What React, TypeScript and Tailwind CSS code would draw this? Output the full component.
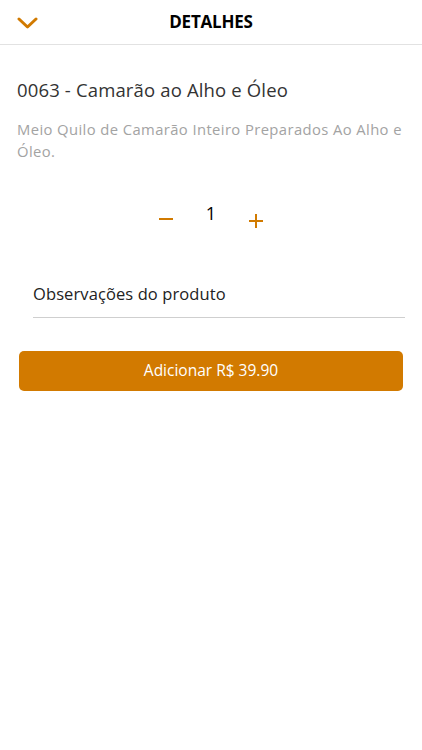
export default function App() {
  const font = { fontFamily: '"Open Sans", Lato, "Noto Sans", sans-serif' };
  return (
    <div className="w-[422px] h-[750px] bg-white" style={font}>
      <header className="relative h-[45px] flex items-center justify-center border-b border-[#e2e2e2]">
        <svg className="absolute left-[17px] top-[16px]" width="21" height="14" viewBox="0 0 21 14">
          <path d="M2 3 L10.5 11 L19 3" fill="none" stroke="#d17a00" strokeWidth="3" strokeLinecap="round" strokeLinejoin="round" />
        </svg>
        <h1 className="text-[17px] font-bold text-black tracking-[-0.2px]">DETALHES</h1>
      </header>
      <div className="px-[17px] pt-[32px]">
        <h2 className="text-[18.5px] text-[#333] leading-[26px] tracking-[0.15px]">0063 - Camarão ao Alho e Óleo</h2>
        <p className="mt-[15px] text-[14.8px] leading-[22px] text-[#a3a3a3] tracking-[0.4px]">
          Meio Quilo de Camarão Inteiro Preparados Ao Alho e Óleo.
        </p>
      </div>
      <div className="mt-[38px] flex items-start justify-center gap-[32px] h-[30px]">
        <svg width="16" height="16" viewBox="0 0 16 16" className="mt-[11px]">
          <path d="M1 8 H15" stroke="#d17a00" strokeWidth="2" />
        </svg>
        <span className="text-[18px] text-black leading-[24px] mt-[1px]">1</span>
        <svg width="16" height="16" viewBox="0 0 16 16" className="mt-[13px]">
          <path d="M1 8 H15 M8 1 V15" stroke="#d17a00" strokeWidth="2" />
        </svg>
      </div>
      <div className="ml-[33px] mr-[17px] mt-[52px] border-b border-[#cfcfcf] pb-[11px]">
        <span className="text-[16.5px] text-[#222] leading-[24px] tracking-[0.1px]">Observações do produto</span>
      </div>
      <div className="px-[19px] mt-[33px]">
        <button className="w-full h-[40px] rounded-[5px] bg-[#d27a00] text-white text-[15.5px] flex items-center justify-center">
          Adicionar R$ 39.90
        </button>
      </div>
    </div>
  );
}
